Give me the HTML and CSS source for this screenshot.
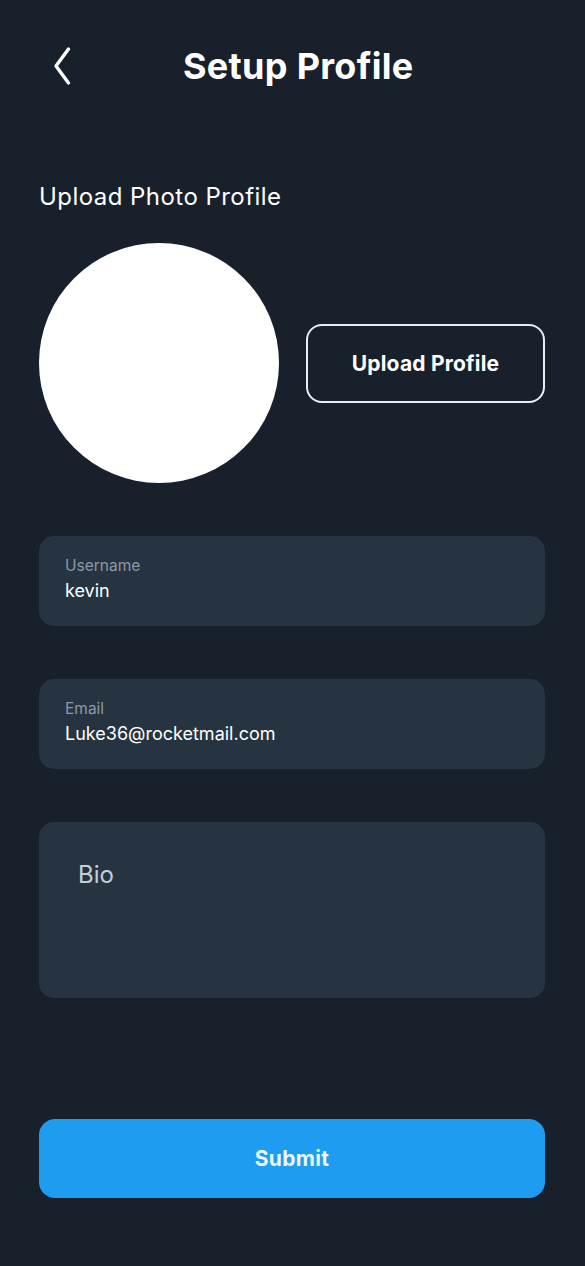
FILE: index.html
```html
<!DOCTYPE html>
<html lang="en">
<head>
<meta charset="utf-8">
<title>Setup Profile</title>
<link rel="stylesheet" href="styles.css">
</head>
<body>
<div class="screen">
  <header class="topbar">
    <button class="back" aria-label="Back">
      <svg width="20" height="40" viewBox="0 0 20 40"><path d="M16.5 3 L4 20 L16.5 37" fill="none" stroke="#ffffff" stroke-width="3.4" stroke-linecap="round" stroke-linejoin="round"/></svg>
    </button>
    <h1 class="title">Setup Profile</h1>
  </header>

  <section class="photo">
    <h2 class="section-label">Upload Photo Profile</h2>
    <div class="photo-row">
      <div class="avatar"></div>
      <button class="outline-btn">Upload Profile</button>
    </div>
  </section>

  <form class="form">
    <label class="field">
      <span class="field-label">Username</span>
      <span class="field-value">kevin</span>
    </label>
    <label class="field">
      <span class="field-label">Email</span>
      <span class="field-value">Luke36@rocketmail.com</span>
    </label>
    <div class="bio">Bio</div>
  </form>

  <button class="submit">Submit</button>
</div>
</body>
</html>
```

FILE: styles.css
```css
* { box-sizing: border-box; }
html, body {
  margin: 0;
  padding: 0;
  background: #18202b;
}
body {
  font-family: "Inter", "Lato", sans-serif;
  color: #ffffff;
}
.screen {
  width: 585px;
  height: 1266px;
  padding: 0 40px 0 39px;
  display: flex;
  flex-direction: column;
}
.topbar {
  height: 132px;
  display: flex;
  align-items: center;
  padding-bottom: 1px;
}
.back {
  background: none;
  border: 0;
  padding: 0;
  margin-left: 13px;
  width: 20px;
  height: 40px;
  display: flex;
  cursor: pointer;
}
.title {
  margin: 0 0 0 111px;
  font-size: 36px;
  font-weight: 700;
  letter-spacing: 0.3px;
  line-height: 1;
}
.photo {
  display: flex;
  flex-direction: column;
}
.section-label {
  margin: 50px 0 0;
  font-size: 24px;
  font-weight: 400;
  letter-spacing: 0.45px;
  line-height: 30px;
  height: 30px;
}
.photo-row {
  margin-top: 31px;
  display: flex;
  align-items: center;
  gap: 27px;
}
.avatar {
  width: 240px;
  height: 240px;
  border-radius: 50%;
  background: #ffffff;
  flex: none;
}
.outline-btn {
  width: 240px;
  height: 79px;
  border: 2px solid #e9edf1;
  border-radius: 16px;
  background: transparent;
  color: #ffffff;
  font-family: inherit;
  font-size: 21px;
  font-weight: 700;
  letter-spacing: 0.2px;
}
.form {
  margin-top: 53px;
  display: flex;
  flex-direction: column;
  gap: 53px;
}
.field {
  height: 90px;
  background: #263441;
  border-radius: 15px;
  padding: 20px 26px 0;
  display: flex;
  flex-direction: column;
}
.field-label {
  font-size: 15.5px;
  line-height: 20px;
  color: #8d99a5;
}
.field-value {
  margin-top: 4px;
  font-size: 18px;
  line-height: 22px;
  color: #ffffff;
}
.bio {
  height: 176px;
  background: #263441;
  border-radius: 15px;
  padding: 38px 39px 0;
  font-size: 24px;
  line-height: 30px;
  color: #c3cfdb;
}
.submit {
  margin-top: 121px;
  height: 79px;
  border: 0;
  border-radius: 16px;
  background: #1e9cef;
  color: #eaf7ff;
  font-family: inherit;
  font-size: 21px;
  font-weight: 700;
  letter-spacing: 0.3px;
}
```
